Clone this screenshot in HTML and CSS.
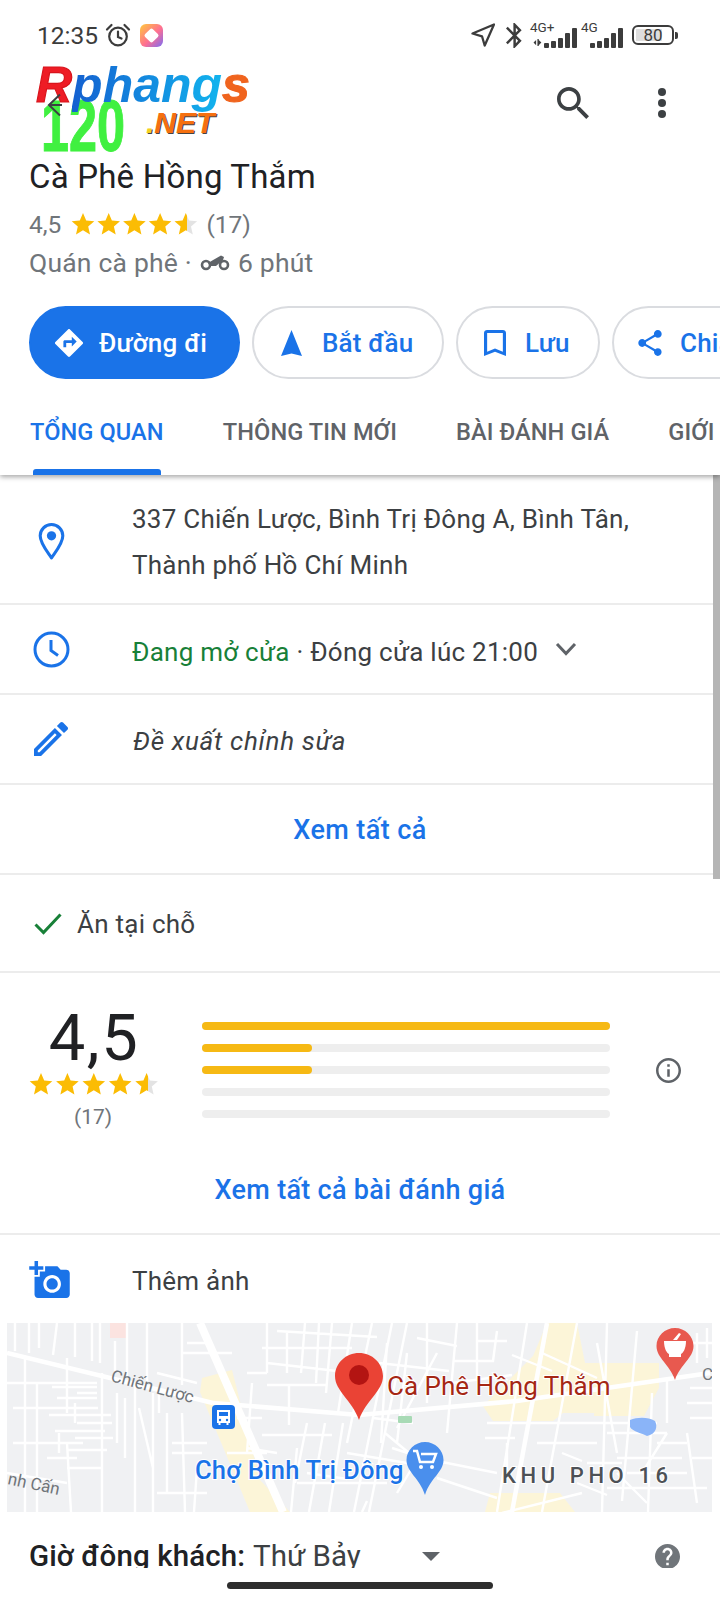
FILE: index.html
```html
<!DOCTYPE html>
<html lang="vi">
<head>
    <meta charset="UTF-8">
    <title>Cà Phê Hồng Thắm</title>
    <link rel="stylesheet" href="styles.css">
</head>
<body>
<svg class="defs" width="0" height="0">
    <defs>
        <linearGradient id="halfstar">
            <stop offset="54%" stop-color="#fbbc04"/>
            <stop offset="54%" stop-color="#e3e3e3"/>
        </linearGradient>
        <symbol id="star" viewBox="0 0 24 24">
            <path d="M12 1l3.200 7.500 8.100.7-6.100 5.300 1.800 7.900L12 18.200l-7 4.200 1.800-7.900L.7 9.200l8.100-.7z"/>
        </symbol>
    </defs>
</svg>

<div class="page">
    <!-- phan dau -->
    <div class="head">
        <div class="status">
            <span class="clock">12:35</span>
            <svg class="alarm" viewBox="0 0 26 24" fill="none" stroke="#3c3c3c" stroke-width="2.200" stroke-linecap="round">
                <circle cx="13" cy="13.500" r="8.800"/>
                <path d="M13 8.500v5.500l3.500 1.500M2 6.500L6.500 2M24 6.500L19.500 2"/>
            </svg>
            <span class="appicon"><i></i></span>
            <span class="spacer"></span>
            <svg class="st-nav" viewBox="0 0 24 24" fill="none" stroke="#3c3c3c" stroke-width="2.300" stroke-linejoin="round">
                <path d="M23 1.500L1.500 10.500l9.500 2.800 2.700 9.200z"/>
            </svg>
            <svg class="st-bt" viewBox="5 2 13 20" fill="#3c3c3c" preserveAspectRatio="none">
                <path d="M17.710 7.710L12 2h-1v7.590L6.410 5 5 6.410 10.590 12 5 17.590 6.410 19 11 14.410V22h1l5.710-5.710-4.300-4.290 4.300-4.290zM13 5.830l1.880 1.880L13 9.590V5.830zm1.880 10.460L13 18.170v-3.760l1.880 1.880z"/>
            </svg>
            <div class="sim sim-one">
                <span class="sim-label">4G+</span>
                <svg class="sim-arrows" viewBox="0 0 10 8" fill="#3c3c3c"><path d="M1 4l3-3v6zM5.500 0h1.500v8H5.500zM7 1l3 3-3 3z"/></svg>
                <span class="bars"><i class="b1"></i><i class="b2"></i><i class="b3"></i><i class="b4"></i><i class="b5"></i></span>
            </div>
            <div class="sim sim-two">
                <span class="sim-label">4G</span>
                <span class="bars"><i class="b1"></i><i class="b2"></i><i class="b3"></i><i class="b4"></i><i class="b5"></i></span>
            </div>
            <div class="battery"><span class="battery-level"></span><b>80</b></div>
            <span class="battery-cap"></span>
        </div>

        <div class="appbar">
            <svg class="back" viewBox="0 0 16 24" fill="none" stroke="#3c4043" stroke-width="2"><path d="M13 1.500L2 12l11 10.500M2 12h13"/></svg>
            <span class="spacer"></span>
            <svg class="search" viewBox="3 3 17.500 17.500" fill="#3c4043"><path d="M15.500 14h-.79l-.28-.27C15.410 12.590 16 11.110 16 9.500 16 5.910 13.090 3 9.500 3S3 5.910 3 9.500 5.910 16 9.500 16c1.610 0 3.090-.59 4.230-1.570l.27.28v.79l5 4.990L20.490 19l-4.990-5zm-6 0C7.010 14 5 11.990 5 9.500S7.010 5 9.500 5 14 7.010 14 9.500 11.990 14 9.500 14z"/></svg>
            <span class="dots"><i></i><i></i><i></i></span>
        </div>

        <div class="logo">
            <div class="logo-num">120</div>
            <div class="logo-name"><span class="l-r">R</span><span class="l-mid">phang</span><span class="l-s">s</span></div>
            <div class="logo-net"><span class="l-dot">.</span>NET</div>
        </div>

        <div class="place">
            <h1>Cà Phê Hồng Thắm</h1>
            <div class="rating">
                <span>4,5</span>
                <svg class="stars" viewBox="0 0 128 24">
                    <use href="#star" x="0" width="24" height="24" fill="#fbbc04"/>
                    <use href="#star" x="25.700" width="24" height="24" fill="#fbbc04"/>
                    <use href="#star" x="51.400" width="24" height="24" fill="#fbbc04"/>
                    <use href="#star" x="77.100" width="24" height="24" fill="#fbbc04"/>
                    <use href="#star" x="102.800" width="24" height="24" fill="url(#halfstar)"/>
                </svg>
                <span>(17)</span>
            </div>
            <div class="sub">
                <span>Quán cà phê ·</span>
                <svg class="moto" viewBox="0 0 30 17" fill="none" stroke="#5f6368" stroke-width="2.600">
                    <circle cx="6" cy="11" r="4"/>
                    <circle cx="24" cy="11" r="4"/>
                    <path d="M8 9l6-3.500 7-4 3 1.500-1 3-7 6H10z" fill="#5f6368" stroke="none"/>
                </svg>
                <span>6 phút</span>
            </div>
        </div>

        <div class="actions">
            <div class="btn btn-main">
                <svg class="ic-dir" viewBox="2 2 20 20" fill="#fff" fill-rule="evenodd"><path d="M21.710 11.290l-9-9a.996.996 0 00-1.410 0l-9 9a.996.996 0 000 1.410l9 9c.39.39 1.020.39 1.410 0l9-9a.996.996 0 000-1.410zM14 14.500V12h-4v3H8v-4c0-.55.45-1 1-1h5V7.500l3.500 3.500-3.500 3.500z"/></svg>
                Đường đi
            </div>
            <div class="btn btn-start">
                <svg class="ic-nav" viewBox="0 0 21 26" fill="#1a73e8"><path d="M10.500 0L21 26l-10.500-2.500L0 26z"/></svg>
                Bắt đầu
            </div>
            <div class="btn btn-save">
                <svg class="ic-save" viewBox="5 3 14 18" fill="#1a73e8" preserveAspectRatio="none"><path d="M17 3H7c-1.100 0-2 .9-2 2v16l7-3 7 3V5c0-1.100-.9-2-2-2zm0 15l-5-2.180L7 18V5h10v13z"/></svg>
                Lưu
            </div>
            <div class="btn btn-share">
                <svg class="ic-share" viewBox="3 2 18 20" fill="#1a73e8"><path d="M18 16.080c-.76 0-1.440.3-1.960.77L8.910 12.700c.05-.23.09-.46.09-.7s-.04-.47-.09-.7l7.050-4.110c.54.5 1.250.81 2.040.81 1.660 0 3-1.340 3-3s-1.340-3-3-3-3 1.340-3 3c0 .24.04.47.09.7L8.040 9.810C7.500 9.310 6.790 9 6 9c-1.660 0-3 1.340-3 3s1.340 3 3 3c.79 0 1.500-.31 2.040-.81l7.120 4.160c-.05.21-.08.43-.08.65 0 1.610 1.310 2.920 2.920 2.920s2.920-1.310 2.920-2.920-1.310-2.920-2.920-2.920z"/></svg>
                Chia sẻ
            </div>
        </div>

        <div class="tabs">
            <div class="tab tab-on">TỔNG QUAN</div>
            <div class="tab">THÔNG TIN MỚI</div>
            <div class="tab">BÀI ĐÁNH GIÁ</div>
            <div class="tab">GIỚI THIỆU</div>
        </div>
    </div>

    <!-- thong tin -->
    <div class="row row-addr">
        <svg class="row-icon" viewBox="0 0 26 36" fill="none" stroke="#1a73e8" stroke-width="3">
            <path d="M13 34C9 28 2 20 2 12.500a11 11 0 0122 0C24 20 17 28 13 34z" stroke-linejoin="round"/>
            <circle cx="13" cy="12.500" r="4.500" fill="#1a73e8" stroke="none"/>
        </svg>
        <div class="row-text">337 Chiến Lược, Bình Trị Đông A, Bình Tân,<br>Thành phố Hồ Chí Minh</div>
    </div>
    <div class="row">
        <svg class="row-icon" viewBox="0 0 37 37" fill="none" stroke="#1a73e8" stroke-width="3">
            <circle cx="18.500" cy="18.500" r="16.500"/>
            <path d="M18 9v10.500l7 5"/>
        </svg>
        <div class="row-text"><span class="open">Đang mở cửa</span> · Đóng cửa lúc 21:00</div>
        <svg class="chevron" viewBox="0 0 22 14" fill="none" stroke="#5f6368" stroke-width="3"><path d="M2 2l9 9.500L20 2"/></svg>
    </div>
    <div class="row">
        <svg class="row-icon row-pencil" viewBox="3 3 18 18" fill="#1a73e8"><path d="M14.060 9.020l.92.92L5.920 19H5v-.92l9.060-9.060M17.660 3c-.25 0-.51.1-.7.29l-1.830 1.830 3.750 3.750 1.830-1.830c.39-.39.39-1.020 0-1.410l-2.340-2.340c-.2-.2-.45-.29-.71-.29zm-3.600 3.190L3 17.250V21h3.750L17.810 9.940l-3.750-3.750z"/></svg>
        <div class="row-text row-edit">Đề xuất chỉnh sửa</div>
    </div>
    <div class="row row-link">Xem tất cả</div>
    <div class="row row-dine">
        <svg class="check" viewBox="0 0 28 22" fill="none" stroke="#188038" stroke-width="3"><path d="M1.500 11.500l8 8L26.500 1.500"/></svg>
        <span>Ăn tại chỗ</span>
    </div>

    <!-- danh gia -->
    <div class="reviews">
        <div class="score-row">
            <div class="score">
                <div class="score-num">4,5</div>
                <svg class="score-stars" viewBox="0 0 130 24">
                    <use href="#star" x="0" width="24" height="24" fill="#fbbc04"/>
                    <use href="#star" x="26.400" width="24" height="24" fill="#fbbc04"/>
                    <use href="#star" x="52.800" width="24" height="24" fill="#fbbc04"/>
                    <use href="#star" x="79.200" width="24" height="24" fill="#fbbc04"/>
                    <use href="#star" x="105.600" width="24" height="24" fill="url(#halfstar)"/>
                </svg>
                <div class="score-count">(17)</div>
            </div>
            <div class="bars-list">
                <div class="bar"><div class="bar-fill" style="width:100%"></div></div>
                <div class="bar"><div class="bar-fill" style="width:27%"></div></div>
                <div class="bar"><div class="bar-fill" style="width:27%"></div></div>
                <div class="bar"></div>
                <div class="bar"></div>
            </div>
            <svg class="info" viewBox="2 2 20 20" fill="#5f6368"><path d="M11 7h2v2h-2zm0 4h2v6h-2zm1-9C6.480 2 2 6.480 2 12s4.480 10 10 10 10-4.480 10-10S17.520 2 12 2zm0 18c-4.410 0-8-3.590-8-8s3.590-8 8-8 8 3.590 8 8-3.590 8-8 8z"/></svg>
        </div>
        <div class="reviews-link">Xem tất cả bài đánh giá</div>
    </div>

    <div class="photo">
        <svg class="photo-icon" viewBox="0 1 23 21" fill="#1a73e8"><path d="M3 4V1h2v3h3v2H5v3H3V6H0V4h3zm3 6V7h3V4h7l1.830 2H21c1.100 0 2 .9 2 2v12c0 1.100-.9 2-2 2H5c-1.100 0-2-.9-2-2V10h3zm7 9c2.760 0 5-2.240 5-5s-2.240-5-5-5-5 2.240-5 5 2.240 5 5 5zm-3.200-5c0 1.770 1.430 3.200 3.200 3.200s3.200-1.430 3.200-3.200-1.430-3.200-3.200-3.200-3.200 1.430-3.200 3.200z"/></svg>
        <span>Thêm ảnh</span>
    </div>

    <!-- ban do -->
    <svg class="map" viewBox="0 0 705 189">
        <rect width="705" height="189" fill="#f0f1f3"/>
        <rect x="103" y="0" width="18" height="15" fill="#fbe3e0"/>
        <g fill="#fcf5d8">
            <path d="M195 55l30-8 28 110 30 32h-40l-25-60-25-60z"/>
            <path d="M540 0h30l8 40h48v50h-70l-10 8h-60l-10-15 30-30 20-20z"/>
            <path d="M483 170h70l15 19h-90z"/>
            <path d="M590 40h62v25l-15 28h-50z"/>
        </g>
        <g fill="none" stroke="#fff" stroke-width="2.400">
            <path d="M0 60H90M18 35V189M30 60V189M60 35V90M6 85h85M6 120h70M60 120l4 69M0 150l60 10M70 70h20M70 100h35M68 115h38M60 127h40M60 145h36M68 100v-20M45 64h45M50 75h40M42 92h62M48 108h50M40 135h30M52 110v20"/>
            <path d="M8 0V28M22 0v30M32 0V25M50 0l-4 32M68 0V34M85 0v38M93 0v40M95 50v139M108 18v30M120 0V55M140 0V60M128 62v127M132 85l14 60M146 70v119M160 90v80M175 90l3 99M165 130h30M190 145l-3 44M152 70v20M110 70v50M118 75v60"/>
            <path d="M150 50l40 10M175 30h50M175 0V62M180 20h20M165 120h35M150 170h50M220 130h40M230 95h25M240 125l30 5M240 50h20M245 60l-5 70"/>
            <path d="M260 0V50M280 10v40M298 0l-4 50M312 0l-3 60M325 0l-6 70M345 0l-14 90M365 0l-25 120M385 0l-38 189M400 0l-38 189M318 100l-16 89M260 40l70 8M255 25h90M270 8l100 6M255 112h70M260 62h60M282 62v40M290 125l-6 64M300 100l-12 60M336 100l-14 89"/>
            <path d="M290 160h90M300 150l40 6M340 130l60 10M366 95l40 5M380 20l-6 100M400 30l-10 90M420 0v80M430 30l-40 75M450 0l-10 110M445 60l60-8M415 135l75 15M420 120l-30 50M430 155l60 20M378 110l30 25M385 125l25 8M410 15l40 8M372 40l70 8M360 178l-5 11"/>
            <path d="M470 0v58M490 8l-4 30h-40M470 18h30M505 32l40 16M520 0l-30 189M535 30l55 25M570 0l-35 189M590 20l20 110M600 0l-5 189M630 8l-15 170M645 70l-4 119M660 55v45M683 65h22M680 80h25M683 95h22M690 10v30M700 5v30M680 20h25"/>
            <path d="M480 100h170M530 120h60M600 110h60M610 135h65M620 150h60M600 165h100M640 180l-30-30M660 110l-25 40M680 110l10 70M570 160l30 12M495 190l80-20M500 120v30M478 115h30M555 130l20 8M580 140h35M650 120h30M685 135h20"/>
        </g>
        <g fill="none" stroke="#fff" stroke-width="4.500">
            <path d="M0 30L206 80"/>
            <path d="M206 80L352 92 510 78 703 50"/>
            <path d="M540 0l-35 189"/>
        </g>
        <path d="M193 0L276 189" fill="none" stroke="#fff" stroke-width="8"/>
        <rect x="391" y="93" width="14" height="7" rx="1" fill="#a8dab5"/>
        <path d="M623 97c8-3 18-3 25 1 3 6 1 13-8 15-5-3-14-4-17-9z" fill="#8ab4f8"/>

        <g class="map-road">
            <text transform="translate(103 58) rotate(15)">Chiến Lược</text>
            <text transform="translate(0 161) rotate(12)">nh Cấn</text>
            <text x="695" y="57">C</text>
        </g>
        <text class="map-market" x="188" y="156">Chợ Bình Trị Đông</text>
        <text class="map-name" x="380" y="72">Cà Phê Hồng Thắm</text>
        <text class="map-area" x="495" y="160">KHU PHO 16</text>

        <!-- tram xe buyt -->
        <rect x="205" y="82" width="23" height="24" rx="4" fill="#1a73e8"/>
        <path d="M210 87h13v13h-1.500v2h-2v-2h-6v2h-2v-2H210z" fill="#fff"/>
        <rect x="212" y="89" width="9" height="4" fill="#1a73e8"/>
        <circle cx="213" cy="97" r="1.200" fill="#1a73e8"/><circle cx="220" cy="97" r="1.200" fill="#1a73e8"/>

        <!-- ghim -->
        <path d="M352 30c-13 0-24 10-24 23 0 15 17 24 24 44 7-20 24-29 24-44 0-13-11-23-24-23z" fill="#ea4335"/>
        <circle cx="352" cy="52" r="10" fill="#b31412"/>

        <path d="M668 5c-10 0-18.500 8-18.500 18 0 12 13 18 18.500 34 5.500-16 18.500-22 18.500-34 0-10-8.500-18-18.500-18z" fill="#e8594f"/>
        <path d="M657 18h22c0 8-3 12-5 13v3h-12v-3c-2-1-5-5-5-13zM666 17l6-7 2 1-4 6z" fill="#fff"/>

        <path d="M418 119c-10 0-18.500 8-18.500 18 0 12 13 18 18.500 35 5.500-17 18.500-23 18.500-35 0-10-8.500-18-18.500-18z" fill="#4a8fed"/>
        <path d="M406 128h4l3 11h13l3-8h-15" fill="none" stroke="#fff" stroke-width="2.500"/>
        <circle cx="414" cy="144" r="2" fill="#fff"/><circle cx="425" cy="144" r="2" fill="#fff"/>
    </svg>

    <div class="busy">
        <b>Giờ đông khách:</b>
        <span class="busy-day">Thứ Bảy</span>
        <span class="caret"></span>
        <svg class="help" viewBox="2 2 20 20" fill="#70757a"><path d="M12 2C6.480 2 2 6.480 2 12s4.480 10 10 10 10-4.480 10-10S17.520 2 12 2zm1 17h-2v-2h2v2zm2.070-7.750l-.9.92C13.450 12.900 13 13.500 13 15h-2v-.5c0-1.100.45-2.100 1.170-2.830l1.240-1.260c.37-.36.59-.86.59-1.410 0-1.100-.9-2-2-2s-2 .9-2 2H8c0-2.210 1.790-4 4-4s4 1.790 4 4c0 .88-.36 1.680-.93 2.250z"/></svg>
    </div>

    <div class="scrollbar"></div>
    <div class="homebar"></div>
</div>
</body>
</html>
```

FILE: styles.css
```css
* {
    padding: 0;
    margin: 0;
    box-sizing: border-box;
}

body {
    background: #fff;
    font-family: Roboto, "Noto Sans", sans-serif;
    color: #3c4043;
}

.defs {
    position: absolute;
}

.page {
    position: relative;
    width: 720px;
    height: 1600px;
    overflow: hidden;
    background: #fff;
}

.spacer {
    flex: 1;
}

/* phan dau */
.head {
    position: relative;
    height: 475px;
    box-shadow: 0 2px 5px rgba(0, 0, 0, .35);
    z-index: 2;
    background: #fff;
}

.status {
    display: flex;
    align-items: center;
    height: 70px;
    padding: 0 42px 0 37px;
}

.clock {
    font-size: 24.500px;
    color: #3c3c3c;
}

.alarm {
    width: 26px;
    height: 24px;
    margin-left: 7px;
}

.appicon {
    width: 23px;
    height: 23px;
    margin-left: 9px;
    border-radius: 6px;
    background: linear-gradient(135deg, #ffc93a, #ff6f91 55%, #7a6cf5);
    display: flex;
    align-items: center;
    justify-content: center;
}

.appicon i {
    width: 11px;
    height: 11px;
    background: #fff;
    border-radius: 2px;
    transform: rotate(45deg);
}

.st-nav {
    width: 24px;
    height: 24px;
}

.st-bt {
    width: 16px;
    height: 25px;
    margin: 0 2px 0 11px;
}

.sim {
    position: relative;
    height: 26px;
    margin-left: 6px;
}

.sim-one {
    width: 47px;
}

.sim-two {
    width: 42px;
    margin-left: 4px;
}

.sim-label {
    position: absolute;
    left: 0;
    top: -3px;
    font-size: 13.500px;
    color: #3c3c3c;
}

.sim-arrows {
    position: absolute;
    left: 2px;
    bottom: 2px;
    width: 10px;
    height: 7px;
}

.bars {
    position: absolute;
    right: 0;
    bottom: 0;
    display: flex;
    align-items: flex-end;
    gap: 2px;
}

.bars i {
    width: 5px;
    background: #3c3c3c;
    border-radius: 1px;
}

.b1 { height: 5px; }
.b2 { height: 7px; }
.b3 { height: 10px; }
.b4 { height: 15px; }
.b5 { height: 20px; }

.battery {
    position: relative;
    width: 42px;
    height: 20px;
    margin-left: 9px;
    border: 2px solid #3c3c3c;
    border-radius: 6px;
    padding: 2px;
    text-align: center;
    font-size: 17px;
    line-height: 12px;
    color: #3c3c3c;
}

.battery b {
    position: relative;
    font-weight: 400;
}

.battery-level {
    position: absolute;
    left: 2px;
    top: 2px;
    width: 26px;
    height: 12px;
    background: #dedede;
}

.battery-cap {
    width: 3px;
    height: 7px;
    margin-left: 1px;
    background: #3c3c3c;
    border-radius: 0 2px 2px 0;
}

.appbar {
    display: flex;
    align-items: center;
    height: 66px;
    padding: 0 54px 0 47px;
}

.back {
    width: 16px;
    height: 24px;
    margin-top: 4px;
    position: relative;
    z-index: 3;
}

.search {
    width: 32px;
    height: 32px;
}

.dots {
    display: flex;
    flex-direction: column;
    gap: 3px;
    margin-left: 69px;
}

.dots i {
    width: 8px;
    height: 8px;
    border-radius: 50%;
    background: #3c4043;
}

/* logo de len tren */
.logo {
    position: absolute;
    left: 34px;
    top: 58px;
    width: 220px;
    height: 96px;
    z-index: 2;
}

.logo-name {
    position: absolute;
    left: 2px;
    top: -2px;
    font: italic 700 50px/58px "Liberation Sans", sans-serif;
    white-space: nowrap;
}

.l-r {
    color: #ee1c25;
    -webkit-text-stroke: 1.200px #d8141c;
}

.l-mid {
    color: transparent;
    background: linear-gradient(90deg, #1460d0, #12b4ee);
    background-clip: text;
    -webkit-background-clip: text;
}

.l-s {
    color: #f0641e;
    -webkit-text-stroke: 1.200px #f0641e;
}

.logo-num {
    position: absolute;
    left: 7px;
    top: 32px;
    width: 90px;
    font: 700 72px/72px "Liberation Sans", sans-serif;
    color: #40f040;
    -webkit-text-stroke: 1px #40f040;
    transform: scaleX(.7);
    transform-origin: 0 0;
}

.logo-net {
    position: absolute;
    left: 112px;
    top: 48px;
    font: italic 700 30px/34px "Liberation Sans", sans-serif;
    color: #f57010;
    text-shadow: 1px 1px 0 #444;
}

.l-dot {
    color: #f4d020;
}

.place {
    padding: 21px 30px 0 29px;
}

h1 {
    font-size: 33px;
    font-weight: 400;
    letter-spacing: .2px;
    line-height: 40px;
    color: #202124;
}

.rating {
    display: flex;
    align-items: center;
    height: 38px;
    margin-top: 8px;
    font-size: 24.500px;
    color: #70757a;
}

.stars {
    width: 128px;
    height: 24px;
    margin: 0 7px 0 10px;
}

.sub {
    display: flex;
    align-items: center;
    height: 38px;
    font-size: 26.500px;
    letter-spacing: .2px;
    color: #70757a;
}

.moto {
    width: 30px;
    height: 17px;
    margin: 0 8px 0 8px;
}

.actions {
    display: flex;
    gap: 12px;
    height: 73px;
    margin-top: 25px;
    padding-left: 29px;
    overflow: hidden;
}

.btn {
    display: flex;
    align-items: center;
    flex: none;
    height: 73px;
    border: 2px solid #dadce0;
    border-radius: 37px;
    font-size: 26px;
    letter-spacing: .2px;
    font-weight: 500;
    color: #1a73e8;
    white-space: nowrap;
}

.btn-main {
    width: 211px;
    padding-left: 24px;
    background: #1a73e8;
    border-color: #1a73e8;
    color: #fff;
}

.btn-start {
    width: 192px;
    padding-left: 27px;
}

.btn-save {
    width: 144px;
    padding-left: 26px;
}

.btn-share {
    padding-left: 24px;
    padding-right: 25px;
}

.ic-dir {
    width: 28px;
    height: 28px;
    margin-right: 16px;
}

.ic-nav {
    width: 21px;
    height: 26px;
    margin-right: 20px;
}

.ic-save {
    width: 22px;
    height: 26px;
    margin-right: 19px;
}

.ic-share {
    width: 24px;
    height: 26px;
    margin-right: 18px;
}

.tabs {
    display: flex;
    gap: 59px;
    height: 96px;
    padding-left: 30px;
    overflow: hidden;
    font-size: 23.600px;
    letter-spacing: .1px;
    font-weight: 500;
    color: #5f6368;
    white-space: nowrap;
}

.tab {
    height: 96px;
    padding-top: 35px;
    line-height: 36px;
}

.tab-on {
    color: #1a73e8;
}

.tab-on::after {
    content: "";
    display: block;
    height: 6px;
    margin: 19px 3px 0;
    background: #1a73e8;
    border-radius: 3px 3px 0 0;
}

/* cac hang */
.row {
    display: flex;
    align-items: center;
    height: 90px;
    border-bottom: 2px solid #ececec;
}

.row-icon {
    flex: none;
    width: 37px;
    height: 37px;
    margin: 0 62px 0 33px;
}

.row-addr {
    height: 130px;
}

.row-addr .row-icon {
    margin-top: 4px;
}

.row-pencil {
    width: 34px;
    height: 34px;
    margin: 0 64px 0 34px;
}

.row-text {
    margin-top: 6px;
    font-size: 26px;
    letter-spacing: .25px;
    line-height: 46px;
    color: #3c4043;
}

.open {
    color: #188038;
}

.chevron {
    width: 22px;
    height: 14px;
    margin-left: 17px;
}

.row-edit {
    margin-top: 4px;
    margin-left: 1px;
    font-style: italic;
    letter-spacing: .7px;
}

.row-link {
    justify-content: center;
    font-size: 27px;
    letter-spacing: .4px;
    font-weight: 500;
    color: #1a73e8;
    padding-top: 2px;
}

.row-dine {
    height: 98px;
    padding-left: 34px;
    padding-top: 2px;
    font-size: 26px;
    letter-spacing: .25px;
    color: #3c4043;
}

.check {
    width: 28px;
    height: 22px;
    margin-right: 15px;
}

/* danh gia */
.reviews {
    height: 262px;
    border-bottom: 2px solid #ececec;
}

.score-row {
    display: flex;
    height: 199px;
}

.score {
    width: 202px;
    padding: 30px 0 0 29px;
}

.score-num {
    width: 130px;
    text-align: center;
    font-size: 65px;
    letter-spacing: 1.500px;
    line-height: 70px;
    color: #202124;
}

.score-stars {
    display: block;
    width: 130px;
    height: 24px;
    margin-top: -1px;
}

.score-count {
    width: 128px;
    margin-top: 8px;
    text-align: center;
    font-size: 21px;
    line-height: 26px;
    color: #70757a;
}

.bars-list {
    display: flex;
    flex-direction: column;
    gap: 14px;
    width: 408px;
    padding-top: 49px;
}

.bar {
    height: 8px;
    flex: none;
    border-radius: 4px;
    background: #eeeeee;
}

.bar-fill {
    height: 8px;
    border-radius: 4px;
    background: #f6b914;
}

.info {
    width: 25px;
    height: 25px;
    margin: 85px 0 0 46px;
}

.reviews-link {
    text-align: center;
    font-size: 27px;
    letter-spacing: .3px;
    font-weight: 500;
    line-height: 36px;
    color: #1a73e8;
}

.photo {
    display: flex;
    align-items: center;
    height: 88px;
    font-size: 26px;
    letter-spacing: .25px;
    color: #3c4043;
}

.photo span {
    margin-top: 4px;
}

.photo-icon {
    width: 41px;
    height: 37px;
    margin: 0 62px 0 29px;
    flex: none;
}

/* ban do */
.map {
    display: block;
    width: 705px;
    height: 189px;
    margin-left: 7px;
}

.map-road {
    font-size: 17px;
    fill: #70757a;
}

.map-market {
    font-size: 25.500px;
    letter-spacing: .2px;
    font-weight: 500;
    fill: #1a73e8;
    stroke: #fff;
    stroke-width: 2px;
    paint-order: stroke;
}

.map-name {
    font-size: 26px;
    fill: #a52714;
    stroke: #fff;
    stroke-width: 2px;
    paint-order: stroke;
}

.map-area {
    font-size: 22px;
    font-weight: 500;
    letter-spacing: 4.600px;
    fill: #4d5156;
    stroke: #fff;
    stroke-width: 2px;
    paint-order: stroke;
}

.busy {
    display: flex;
    align-items: center;
    height: 56px;
    padding: 32px 40px 0 29px;
    overflow: hidden;
}

.busy b {
    font-size: 29.500px;
    letter-spacing: .1px;
    font-weight: 500;
    color: #202124;
    white-space: nowrap;
}

.busy-day {
    margin-left: 8px;
    font-size: 29.500px;
    color: #3c4043;
    white-space: nowrap;
}

.caret {
    width: 0;
    height: 0;
    margin-left: 61px;
    border-left: 9px solid transparent;
    border-right: 9px solid transparent;
    border-top: 9px solid #5f6368;
}

.help {
    width: 25px;
    height: 25px;
    margin-left: auto;
}

.scrollbar {
    position: absolute;
    right: 0;
    top: 475px;
    width: 7px;
    height: 404px;
    background: #b5b5b5;
    z-index: 1;
}

.homebar {
    position: absolute;
    left: 227px;
    top: 1582px;
    width: 266px;
    height: 7px;
    border-radius: 4px;
    background: #2e2e2e;
    z-index: 3;
}
```
